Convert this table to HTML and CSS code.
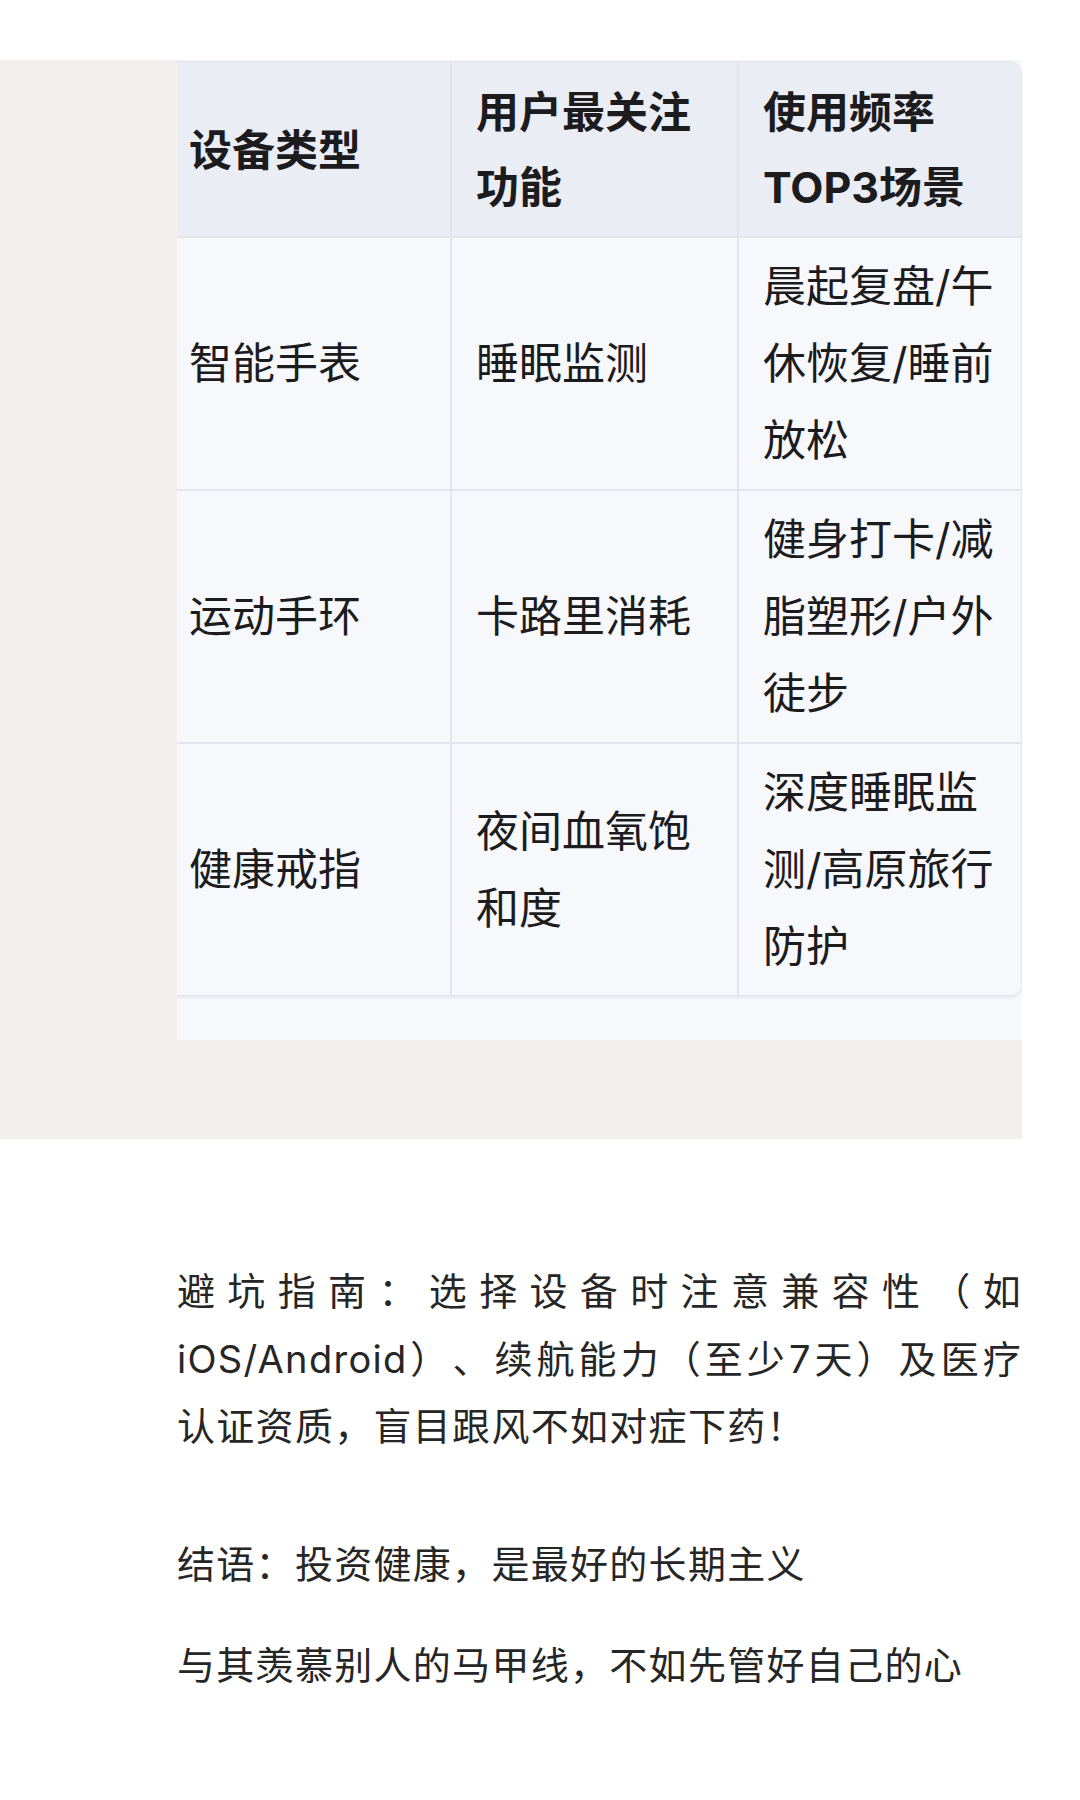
FILE: index.html
```html
<!DOCTYPE html>
<html lang="zh-CN">
<head>
<meta charset="utf-8">
<title>设备选择</title>
<link rel="stylesheet" href="styles.css">
</head>
<body>
<div class="page">
  <div class="panel">
    <div class="scroller">
      <table class="data">
        <colgroup>
          <col class="c1"><col class="c2"><col class="c3">
        </colgroup>
        <thead>
          <tr>
            <th>设备类型</th>
            <th>用户最关注功能</th>
            <th>使用频率TOP3场景</th>
          </tr>
        </thead>
        <tbody>
          <tr>
            <td>智能手表</td>
            <td>睡眠监测</td>
            <td>晨起复盘/午休恢复/睡前放松</td>
          </tr>
          <tr>
            <td>运动手环</td>
            <td>卡路里消耗</td>
            <td>健身打卡/减脂塑形/户外徒步</td>
          </tr>
          <tr>
            <td>健康戒指</td>
            <td>夜间血氧饱和度</td>
            <td>深度睡眠监测/高原旅行防护</td>
          </tr>
        </tbody>
      </table>
    </div>
  </div>
  <p class="guide">避坑指南：选择设备时注意兼容性（如iOS/Android）、续航能力（至少7天）及医疗<span class="term">认证资质</span>，盲目跟风不如对症下药！</p>
  <p class="conclusion">结语：投资健康，是最好的长期主义</p>
  <p class="closing">与其羡慕别人的马甲线，不如先管好自己的心</p>
</div>
</body>
</html>
```

FILE: styles.css
```css
body {
  margin: 0;
  background: #ffffff;
  font-family: Inter, "Noto Sans CJK SC", sans-serif;
  color: #242424;
  text-spacing-trim: space-all;
}

.page {
  width: 845px;
  padding: 60px 0 120px 177px;
}

.panel {
  margin-left: -177px;
  padding-left: 177px;
  padding-bottom: 99px;
  background: #f2efec;
}

.scroller {
  background: #f7f8fc;
  overflow: hidden;
  padding: 1px 0 44px;
}

.data {
  margin-left: -13px;
  width: 858px;
  table-layout: fixed;
  border-collapse: separate;
  border-spacing: 0;
  border: 1px solid #e3e5ec;
  border-radius: 12px;
  overflow: hidden;
  box-shadow: 0 2px 3px rgba(30, 40, 80, 0.08);
  color: #1c1c1e;
  font-size: 43px;
}

.c1 { width: 287px; }
.c2 { width: 287px; }
.c3 { width: 282px; }

.data th {
  background: #ebedf5;
  font-weight: 700;
  line-height: 75px;
  padding: 13px 24px 11px;
  text-align: left;
  vertical-align: middle;
  border-bottom: 2px solid #e3e5ec;
  border-right: 2px solid #e3e5ec;
}

.data td {
  background: #f7f8fc;
  font-weight: 400;
  line-height: 77px;
  padding: 10px 24px;
  vertical-align: middle;
  border-bottom: 2px solid #e3e5ec;
  border-right: 2px solid #e3e5ec;
}

.data th:last-child,
.data td:last-child {
  border-right: none;
}

.data tbody tr:last-child td {
  border-bottom: none;
}

.guide,
.conclusion,
.closing {
  margin: 0;
  font-size: 38px;
  letter-spacing: 1.3px;
  line-height: 67.5px;
  color: #262626;
}

.guide {
  margin-top: 119px;
  text-align: justify;
}

.term {
  white-space: nowrap;
}

.conclusion {
  margin-top: 70px;
}

.closing {
  margin-top: 34px;
}
```
